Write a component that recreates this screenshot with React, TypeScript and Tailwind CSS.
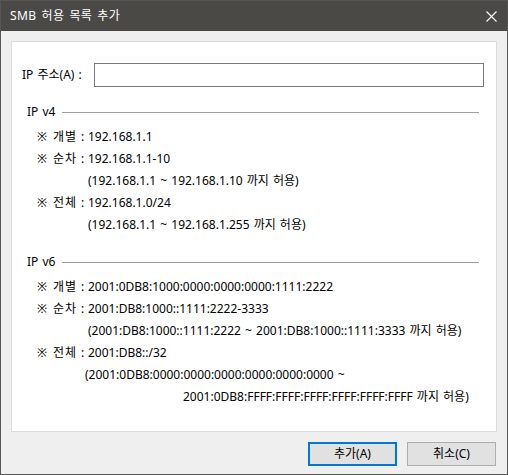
import React from "react";

const font = { fontFamily: '"Noto Sans", "Noto Sans CJK KR", sans-serif' };

const Item = ({ label, lines }: { label: string; lines: React.ReactNode[] }) => (
  <>
    <div className="flex h-[22px] items-center">
      <span className="w-[16px]">※</span>
      <span className="w-[28px] tracking-[1px]">{label}</span>
      <span className="w-[7px]">:</span>
      <span>{lines[0]}</span>
    </div>
    {lines.slice(1).map((l, i) => (
      <div key={i} className="flex h-[22px] items-center pl-[51px] whitespace-pre">
        {l}
      </div>
    ))}
  </>
);

const Section = ({ title }: { title: string }) => (
  <div className="flex h-[22px] items-center pl-[15px] pr-[17px]">
    <span className="pr-[7px]">{title}</span>
    <div className="h-px flex-1 bg-[#a0a0a0]" />
  </div>
);

export default function App() {
  return (
    <div
      className="flex h-[475px] w-[508px] flex-col border border-[#565656] bg-[#efefef] text-[12px] leading-[22px] text-black [word-spacing:1px]"
      style={font}
    >
      <div className="flex h-[30px] shrink-0 items-center justify-between bg-[#4b4946] pl-[9px] pr-[10px] text-white">
        <span className="tracking-[0.4px] [word-spacing:1.5px]">SMB 허용 목록 추가</span>
        <svg width="11" height="11" viewBox="0 0 11 11">
          <path d="M0.5 0.5 L10.5 10.5 M10.5 0.5 L0.5 10.5" stroke="#fff" strokeWidth="1.1" />
        </svg>
      </div>
      <div className="flex flex-1 flex-col px-[10px] pt-[10px]">
        <div className="h-[391px] border border-[#dcdcdc] bg-white">
          <div className="mt-[21px] flex items-center pl-[10px]">
            <span className="w-[72px]">IP 주소(A) :</span>
            <div className="h-[24px] w-[390px] border border-[#7a7a7a] bg-white" />
          </div>
          <div className="mt-[14px]">
            <Section title="IP v4" />
          </div>
          <div className="mt-[3px] pl-[25px]">
            <Item label="개별" lines={["192.168.1.1"]} />
            <Item label="순차" lines={["192.168.1.1-10", "(192.168.1.1 ~ 192.168.1.10 까지 허용)"]} />
            <Item label="전체" lines={["192.168.1.0/24", "(192.168.1.1 ~ 192.168.1.255 까지 허용)"]} />
          </div>
          <div className="mt-[15px]">
            <Section title="IP v6" />
          </div>
          <div className="mt-[3px] pl-[25px]">
            <Item label="개별" lines={["2001:0DB8:1000:0000:0000:0000:1111:2222"]} />
            <Item
              label="순차"
              lines={["2001:DB8:1000::1111:2222-3333", "(2001:DB8:1000::1111:2222 ~ 2001:DB8:1000::1111:3333 까지 허용)"]}
            />
            <Item label="전체" lines={["2001:DB8::/32"]} />
            <div className="flex h-[22px] items-center pl-[48px]">(2001:0DB8:0000:0000:0000:0000:0000:0000 ~</div>
            <div className="flex h-[22px] items-center pl-[146px]">2001:0DB8:FFFF:FFFF:FFFF:FFFF:FFFF:FFFF 까지 허용)</div>
          </div>
        </div>
        <div className="mt-[10px] flex justify-end gap-[10px] pr-[1px]">
          <button className="h-[24px] w-[89px] border-2 border-[#0078d7] bg-[#e1e1e1] text-[12px] leading-none">
            추가(A)
          </button>
          <button className="h-[24px] w-[89px] border border-[#adadad] bg-[#e1e1e1] text-[12px] leading-none">
            취소(C)
          </button>
        </div>
      </div>
    </div>
  );
}
